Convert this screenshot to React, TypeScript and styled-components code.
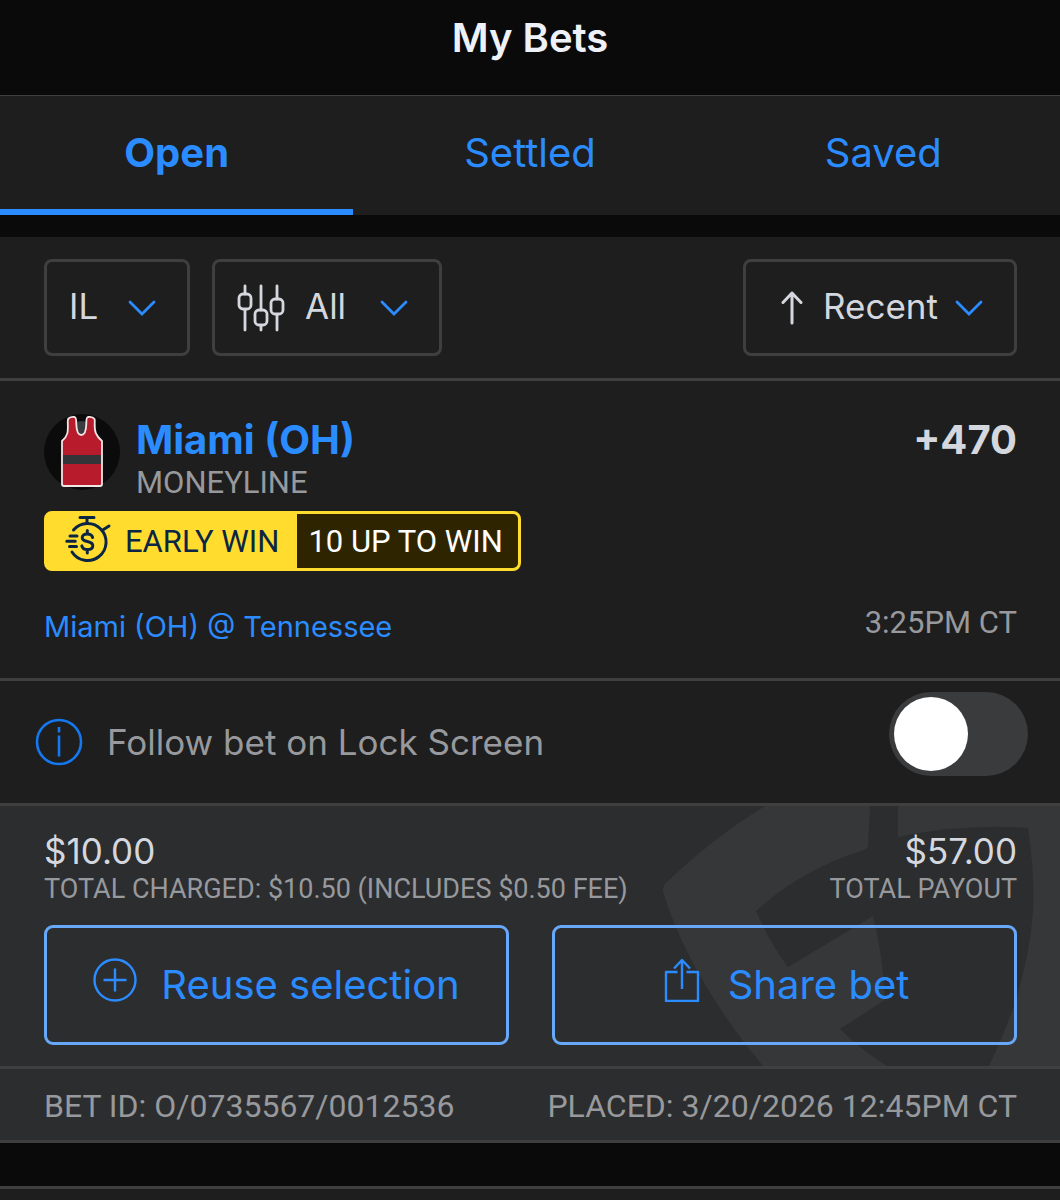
import React, { useState } from "react";
import styled, { createGlobalStyle, css } from "styled-components";

const color = {
  ink: "#0a0a0a",
  panel: "#1e1e1e",
  raised: "#2c2d2f",
  watermark: "#363739",
  line: "#3f3f40",
  blue: "#2b8cff",
  outline: "#68a8f8",
  text: "#d4d7de",
  muted: "#97999d",
  yellow: "#ffdc2e",
  navy: "#0b2545",
};

const sans = `Inter, "Open Sans", "Liberation Sans", sans-serif`;
const caption = `Roboto, "Liberation Sans", sans-serif`;

const GlobalStyle = createGlobalStyle`
  *, *::before, *::after { box-sizing: border-box; }
  body {
    margin: 0;
    background: ${color.panel};
    color: ${color.text};
    font-family: ${sans};
  }
  h1, h2, p { margin: 0; }
  a { color: ${color.blue}; text-decoration: none; }
  button, select { font: inherit; color: inherit; margin: 0; cursor: pointer; }
`;

const Header = styled.header`
  padding: 14px 44px 33px;
  background: ${color.ink};
  border-bottom: 1px solid ${color.line};
  text-align: center;
`;

const PageTitle = styled.h1`
  font-size: 40px;
  line-height: 48px;
  font-weight: 600;
  color: #eef1f8;
`;

const Tabs = styled.div`
  display: grid;
  grid-template-columns: repeat(3, 1fr);
  background: ${color.panel};
`;

const Tab = styled.button<{ $active: boolean }>`
  padding: 33px 0 32px;
  border: 0;
  border-bottom: 6px solid ${(p) => (p.$active ? color.blue : "transparent")};
  background: none;
  color: ${color.blue};
  font-size: 40px;
  line-height: 48px;
  font-weight: ${(p) => (p.$active ? 700 : 400)};
`;

const Spacer = styled.div<{ $size: number }>`
  height: ${(p) => p.$size}px;
  background: ${color.ink};
`;

const Card = styled.article`
  background: ${color.panel};
  border-bottom: 3px solid ${color.line};
`;

const NextCard = styled.div`
  height: 14px;
  border-top: 3px solid ${color.line};
`;

const Filters = styled.div`
  display: flex;
  gap: 22px;
  padding: 22px 43px 22px 44px;
  background: ${color.panel};
  border-bottom: 3px solid ${color.line};
`;

const Picker = styled.label<{ $end?: boolean }>`
  display: flex;
  align-items: center;
  height: 97px;
  padding: 0 30px 0 22px;
  border: 3px solid ${color.line};
  border-radius: 8px;
  ${(p) =>
    p.$end &&
    css`
      margin-left: auto;
      padding-left: 35px;
    `}
`;

const Select = styled.select<{ $before?: number; $after: number }>`
  appearance: none;
  padding: 0 0 3px;
  margin: 0 ${(p) => p.$after}px 0 ${(p) => p.$before ?? 0}px;
  border: 0;
  background: ${color.panel};
  font-size: 35px;
  line-height: 44px;
`;

const BetDetails = styled.section`
  padding: 33px 43px 29px 44px;
`;

const Selection = styled.div`
  display: flex;
  gap: 16px;
`;

const Avatar = styled.svg`
  flex: none;
  width: 76px;
  height: 76px;
`;

const SelectionText = styled.div`
  flex: 1;
`;

const SelectionName = styled.h2`
  font-size: 40px;
  line-height: 52px;
  font-weight: 700;
`;

const Odds = styled.strong`
  font-size: 40px;
  line-height: 52px;
  font-weight: 700;
`;

const Market = styled.p`
  font-family: ${caption};
  font-size: 31px;
  line-height: 34px;
  color: ${color.muted};
`;

const Promo = styled.div`
  display: inline-flex;
  height: 60px;
  margin-top: 11px;
  border: 3px solid ${color.yellow};
  border-radius: 8px;
  background: ${color.yellow};
  overflow: hidden;
  font-family: ${caption};
  font-size: 31px;
  line-height: 56px;
`;

const PromoName = styled.span`
  display: flex;
  gap: 14px;
  padding: 0 18px;
  color: ${color.navy};
`;

const PromoTerms = styled.span`
  padding: 0 15px 0 11px;
  background: #2e2500;
  color: #fff;
`;

const EventRow = styled.div`
  display: flex;
  justify-content: space-between;
  align-items: flex-start;
  margin-top: 34px;
`;

const EventLink = styled.a`
  font-size: 29px;
  line-height: 44px;
`;

const EventTime = styled.time`
  font-family: ${caption};
  font-size: 31px;
  line-height: 35px;
  color: ${color.muted};
`;

const FollowRow = styled.section`
  display: flex;
  align-items: center;
  gap: 24px;
  padding: 11px 32px 11px 35px;
  border-top: 3px solid ${color.line};
  border-bottom: 3px solid ${color.line};
`;

const InfoButton = styled.button`
  display: flex;
  padding: 0;
  border: 0;
  background: none;
  color: #1478f0;
`;

const FollowLabel = styled.label`
  flex: 1;
  font-size: 35px;
  line-height: 44px;
  color: ${color.muted};
`;

const Toggle = styled.input`
  appearance: none;
  display: flex;
  width: 139px;
  height: 84px;
  margin: 0 0 16px;
  padding: 5px;
  border-radius: 42px;
  background: #3a3b3d;
  cursor: pointer;

  &::before {
    content: "";
    width: 74px;
    height: 74px;
    border-radius: 50%;
    background: #fff;
  }

  &:checked {
    justify-content: flex-end;
    background: ${color.blue};
  }
`;

const Payout = styled.section`
  position: relative;
  padding: 23px 43px 21px 44px;
  background: ${color.raised};
`;

const Watermark = styled.svg`
  position: absolute;
  top: 0;
  right: 0;
  width: 420px;
  height: 100%;
  fill: ${color.watermark};
`;

const Totals = styled.div`
  position: relative;
  display: flex;
  justify-content: space-between;
`;

const Total = styled.div<{ $right?: boolean }>`
  text-align: ${(p) => (p.$right ? "right" : "left")};
`;

const Amount = styled.p`
  font-size: 35px;
  line-height: 45px;
`;

const AmountNote = styled.p`
  font-family: ${caption};
  font-size: 27px;
  line-height: 31px;
  color: ${color.muted};
`;

const Actions = styled.div`
  position: relative;
  display: grid;
  grid-template-columns: 1fr 1fr;
  gap: 43px;
  margin-top: 20px;
`;

const Action = styled.button`
  display: flex;
  align-items: center;
  justify-content: center;
  gap: 24px;
  height: 120px;
  border: 3px solid ${color.outline};
  border-radius: 9px;
  background: none;
  color: ${color.blue};
  font-size: 40px;
  line-height: 48px;

  svg {
    margin-bottom: 10px;
  }
`;

const Receipt = styled.footer`
  display: flex;
  justify-content: space-between;
  padding: 20px 43px 16px 44px;
  border-top: 3px solid ${color.line};
  background: ${color.raised};
  font-family: ${caption};
  font-size: 32px;
  line-height: 35px;
  color: ${color.muted};
`;

const Chevron = () => (
  <svg width="30" height="18" viewBox="0 0 30 18" fill="none" stroke={color.blue} strokeWidth="2.8" strokeLinecap="round" aria-hidden="true">
    <path d="M3 3 15 15 27 3" />
  </svg>
);

const Sliders = () => (
  <svg width="48" height="48" viewBox="0 0 48 48" fill="none" stroke={color.text} strokeWidth="2.8" strokeLinecap="round" aria-hidden="true">
    <path d="M8 2v8M8 26v20M24 2v24M24 42v4M40 2v13M40 31v15" />
    <rect x="2" y="10" width="12" height="15" rx="4" />
    <rect x="18" y="26" width="12" height="15" rx="4" />
    <rect x="34" y="15" width="12" height="15" rx="4" />
  </svg>
);

const ArrowUp = () => (
  <svg width="22" height="34" viewBox="0 0 22 34" fill="none" stroke={color.text} strokeWidth="3" strokeLinecap="round" strokeLinejoin="round" aria-hidden="true">
    <path d="M11 32V2M2 11.5 11 2l9 9.5" />
  </svg>
);

const jerseyShape =
  "M24.5 4.5Q27 2.5 30.5 3C32.5 3.5 32.200 6 32.300 10c.2 7 1.500 11 5 11s4.800-4 5-11c.1-4-.2-6.500 1.700-7 3.500-.5 5.500.5 6.500 2 .5 1 .2 2.500.2 4.500-.2 8 .8 12 7.300 17.500V70q0 2-2 2H20q-2 0-2-2V27C24.500 21.500 24 17 23.800 9c0-2-.3-3.500.7-4.500Z";

const Jersey = () => (
  <Avatar viewBox="0 0 76 76" aria-hidden="true">
    <circle cx="38" cy="38" r="38" fill="#0b0b0c" />
    <path d="M32 8c3-1 8-1 11 0l-1 10-4 4-5-4z" fill="#3a3c40" />
    <path d={jerseyShape} fill="#b81c2c" />
    <path d="M18 41h40v9H18z" fill="#333437" />
    <path d={jerseyShape} fill="none" stroke="#f1e6e6" strokeWidth="1.8" />
  </Avatar>
);

const Stopwatch = () => (
  <svg width="46" height="50" viewBox="0 0 46 50" fill="none" stroke={color.navy} strokeWidth="3" strokeLinecap="round" aria-hidden="true">
    <path d="M15 3.500h14M22 3.500v6M37 16.500l7-4.500" />
    <path d="M8.500 16A18.500 18.500 0 1 1 7 38" />
    <path d="M5 22h7M1.800 27.200h8.500M4.500 32.400h7" />
    <path d="M27.600 23.500c-.6-2.300-2.600-3.500-5.300-3.500-3 0-5.100 1.500-5.100 3.700 0 2.600 2.400 3.200 5.200 3.800s5.400 1.500 5.400 4.200c0 2.400-2.200 3.900-5.400 3.900-3 0-5-1.300-5.600-3.700M22.300 16.500V20M22.300 35.600V39" />
  </svg>
);

const Info = () => (
  <svg width="48" height="48" viewBox="0 0 48 48" fill="none" stroke="currentColor" strokeWidth="2.6" aria-hidden="true">
    <circle cx="24" cy="24" r="22" />
    <path d="M24 17.500v21M24 9v5.500" />
  </svg>
);

const PlusCircle = () => (
  <svg width="44" height="44" viewBox="0 0 44 44" fill="none" stroke="currentColor" strokeWidth="2.4" aria-hidden="true">
    <circle cx="22" cy="22" r="20.5" />
    <path d="M22 10.500v23M10.500 22h23" />
  </svg>
);

const Share = () => (
  <svg width="44" height="44" viewBox="0 0 44 44" fill="none" stroke="currentColor" strokeWidth="2.4" strokeLinejoin="round" aria-hidden="true">
    <path d="M17.500 14H6v29h32V14H26.500" />
    <path d="M22 31V2M14 10.500 22 2l8 8.500" />
  </svg>
);

const tabs = ["Open", "Settled", "Saved"];

export default function App() {
  const [tab, setTab] = useState("Open");

  return (
    <>
      <GlobalStyle />
      <Header>
        <PageTitle>My Bets</PageTitle>
      </Header>
      <Tabs role="tablist">
        {tabs.map((name) => (
          <Tab key={name} role="tab" type="button" aria-selected={tab === name} $active={tab === name} onClick={() => setTab(name)}>
            {name}
          </Tab>
        ))}
      </Tabs>
      <Spacer $size={22} />
      <main>
        <Filters>
          <Picker>
            <Select aria-label="State" $after={28}>
              <option>IL</option>
            </Select>
            <Chevron />
          </Picker>
          <Picker>
            <Sliders />
            <Select aria-label="Bet type" $before={20} $after={32}>
              <option>All</option>
            </Select>
            <Chevron />
          </Picker>
          <Picker $end>
            <ArrowUp />
            <Select aria-label="Sort order" $before={20} $after={16}>
              <option>Recent</option>
            </Select>
            <Chevron />
          </Picker>
        </Filters>

        <Card>
          <BetDetails>
            <Selection>
              <Jersey />
              <SelectionText>
                <SelectionName>
                  <a href="#selection">Miami (OH)</a>
                </SelectionName>
                <Market>MONEYLINE</Market>
              </SelectionText>
              <Odds>+470</Odds>
            </Selection>
            <Promo>
              <PromoName>
                <Stopwatch />
                EARLY WIN
              </PromoName>
              <PromoTerms>10 UP TO WIN</PromoTerms>
            </Promo>
            <EventRow>
              <EventLink href="#event">Miami (OH) @ Tennessee</EventLink>
              <EventTime>3:25PM CT</EventTime>
            </EventRow>
          </BetDetails>

          <FollowRow>
            <InfoButton type="button" aria-label="About Lock Screen updates">
              <Info />
            </InfoButton>
            <FollowLabel htmlFor="follow">Follow bet on Lock Screen</FollowLabel>
            <Toggle id="follow" type="checkbox" role="switch" />
          </FollowRow>

          <Payout>
            <Watermark viewBox="0 0 420 260" preserveAspectRatio="xMaxYMin slice" aria-hidden="true">
              <path d="M125 0Q70 34 26 77q-4 4-3 9Q50 172 123 260H247Q222 245 200 223L245 194Q243 150 233 110L148 161Q130 137 116 105 162 63 224 44q4-1 4-5L230 0Z" />
              <path d="M258 0V31Q322 17 388 22 395 70 393 105 388 180 349 260h71V0Z" />
            </Watermark>
            <Totals>
              <Total>
                <Amount>$10.00</Amount>
                <AmountNote>TOTAL CHARGED: $10.50 (INCLUDES $0.50 FEE)</AmountNote>
              </Total>
              <Total $right>
                <Amount>$57.00</Amount>
                <AmountNote>TOTAL PAYOUT</AmountNote>
              </Total>
            </Totals>
            <Actions>
              <Action type="button">
                <PlusCircle />
                Reuse selection
              </Action>
              <Action type="button">
                <Share />
                Share bet
              </Action>
            </Actions>
          </Payout>

          <Receipt>
            <span>BET ID: O/0735567/0012536</span>
            <span>PLACED: 3/20/2026 12:45PM CT</span>
          </Receipt>
        </Card>
        <Spacer $size={43} />
        <NextCard />
      </main>
    </>
  );
}
